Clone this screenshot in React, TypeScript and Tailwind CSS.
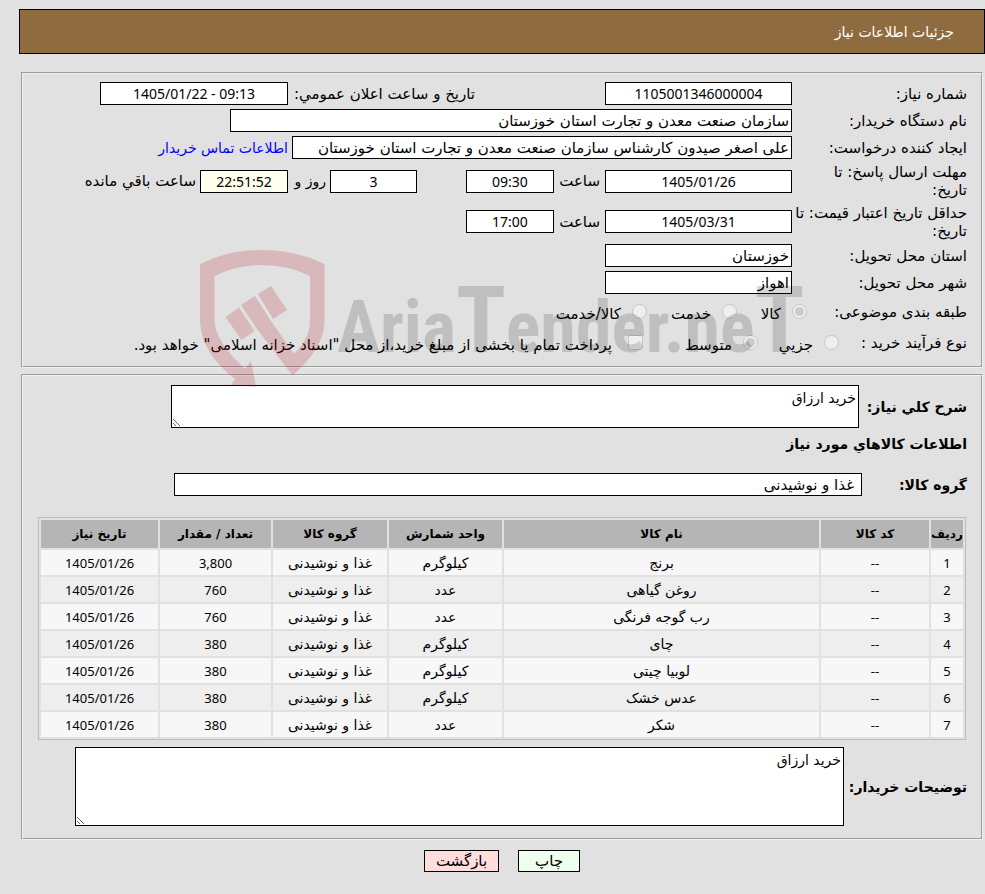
import React from 'react';

interface Item {
  name: string;
  unit: string;
  amount: string;
}

const items: Item[] = [
  { name: 'برنج', unit: 'کیلوگرم', amount: '3,800' },
  { name: 'روغن گیاهی', unit: 'عدد', amount: '760' },
  { name: 'رب گوجه فرنگی', unit: 'عدد', amount: '760' },
  { name: 'چای', unit: 'کیلوگرم', amount: '380' },
  { name: 'لوبیا چیتی', unit: 'کیلوگرم', amount: '380' },
  { name: 'عدس خشک', unit: 'کیلوگرم', amount: '380' },
  { name: 'شکر', unit: 'عدد', amount: '380' },
];

const group = 'غذا و نوشیدنی';
const neededAt = '1405/01/26';

interface BoxProps {
  id: string;
  value: string;
  className: string;
}

const Box: React.FC<BoxProps> = ({ id, value, className }) => (
  <input id={id} value={value} readOnly className={`h-[23px] shrink-0 border border-black bg-white px-[2px] ${className}`} />
);

// dates, times and counts
const NumberBox: React.FC<BoxProps> = ({ id, value, className }) => (
  <input
    id={id}
    value={value}
    readOnly
    className={`h-[23px] shrink-0 border border-black px-[2px] text-center font-['Noto_Sans',sans-serif] text-[14px] ${className}`}
  />
);

interface RowProps {
  label: string;
  htmlFor?: string;
  className?: string;
  labelClass?: string;
  children: React.ReactNode;
}

const Row: React.FC<RowProps> = ({ label, htmlFor, className = 'h-[27px]', labelClass = 'w-[175px]', children }) => (
  <div className={`flex items-center ${className}`}>
    <label htmlFor={htmlFor} className={`shrink-0 ${labelClass}`}>
      {label}
    </label>
    {children}
  </div>
);

interface OptionProps {
  name: string;
  label: string;
  checked?: boolean;
  className: string;
}

const Option: React.FC<OptionProps> = ({ name, label, checked = false, className }) => (
  <label className={`flex shrink-0 items-center gap-[11px] whitespace-nowrap ${className}`}>
    <input type="radio" name={name} defaultChecked={checked} disabled className="size-[15px] shrink-0" />
    <span className="pt-1">{label}</span>
  </label>
);

const Watermark: React.FC = () => (
  <div dir="ltr" aria-hidden="true" className="pointer-events-none absolute top-[250px] left-[200px] flex">
    <svg width="125" height="137" viewBox="0 0 125 137" className="shrink-0 fill-[#b4141e]/20">
      <path d="M0 14Q28 0 62 0T124.500 14V72Q124 98 92.500 125.500L57 79L71 71L94 104Q110 88 110 72V26Q88 15 62 15T14.500 26V72Q16 92 45 119L51 111L56 137L31 135L35 129Q2 104 0 72Z" />
      <path d="M25.500 67L39 57.500L54.500 81L41.500 90Z" />
      <path d="M41 55L55 46L71 71L57 79Z" />
      <path d="M58 44L71 36L87 60L73 69Z" />
    </svg>
    <span className="ml-3 pt-[26px] font-['Roboto_Condensed','Liberation_Sans_Narrow',sans-serif] text-[72px] leading-[90px] font-bold whitespace-nowrap text-black/15">
      Aria<span className="text-[92px]">T</span>ender.ne<span className="text-[92px]">T</span>
    </span>
  </div>
);

const App: React.FC = () => {
  return (
    <div
      dir="rtl"
      className="relative min-h-screen bg-[#e1e1e1] pt-[9px] pb-[22px] pl-[19px] font-['DejaVu_Sans',sans-serif] text-[15px] leading-[18px] text-black"
    >
      <header className="flex h-[45px] items-center border border-black bg-[#8f6c40] px-[30px]">
        <h1 className="text-[14px] text-white">جزئیات اطلاعات نیاز</h1>
      </header>

      <fieldset className="mt-[18px] mr-[2px] ml-[2px] border-2 border-[#f0f0f0] px-[14px] pt-[6px] pb-[8px] [border-style:groove]">
        <Row label="شماره نیاز:" htmlFor="number">
          <div className="w-[317px] shrink-0">
            <NumberBox id="number" value="1105001346000004" className="w-[187px] bg-white" />
          </div>
          <label htmlFor="announced" className="w-[187px] shrink-0 whitespace-nowrap">
            تاریخ و ساعت اعلان عمومي:
          </label>
          <NumberBox id="announced" value="1405/01/22 - 09:13" className="w-[188px] bg-white [direction:ltr]" />
        </Row>
        <Row label="نام دستگاه خریدار:" htmlFor="buyer">
          <Box id="buyer" value="سازمان صنعت معدن و تجارت استان خوزستان" className="w-[562px]" />
        </Row>
        <Row label="ایجاد کننده درخواست:" htmlFor="creator">
          <Box
            id="creator"
            value="علی اصغر صیدون کارشناس سازمان صنعت معدن و تجارت استان خوزستان"
            className="w-[500px]"
          />
          <a href="#contact" className="mr-1 text-[14px] whitespace-nowrap text-[#0000ff]">
            اطلاعات تماس خریدار
          </a>
        </Row>
        <Row label="مهلت ارسال پاسخ: تا تاریخ:" htmlFor="deadline" className="h-[40px]" labelClass="w-[175px] pl-[30px]">
          <NumberBox id="deadline" value="1405/01/26" className="w-[187px] bg-white" />
          <label htmlFor="deadlineTime" className="w-[51px] shrink-0 pr-[5px]">
            ساعت
          </label>
          <NumberBox id="deadlineTime" value="09:30" className="w-[88px] bg-white" />
          <NumberBox id="daysLeft" value="3" className="mr-[49px] w-[87px] bg-white" />
          <label htmlFor="daysLeft" className="w-[42px] shrink-0 pr-1 text-[14px] whitespace-nowrap">
            روز و
          </label>
          <NumberBox id="timeLeft" value="22:51:52" className="w-[88px] bg-[#ffffee]" />
          <label htmlFor="timeLeft" className="pr-1 whitespace-nowrap">
            ساعت باقي مانده
          </label>
        </Row>
        <Row label="حداقل تاریخ اعتبار قیمت: تا تاریخ:" htmlFor="validity" className="h-[41px]">
          <NumberBox id="validity" value="1405/03/31" className="w-[187px] bg-white" />
          <label htmlFor="validityTime" className="w-[51px] shrink-0 pr-[5px]">
            ساعت
          </label>
          <NumberBox id="validityTime" value="17:00" className="w-[88px] bg-white" />
        </Row>
        <Row label="استان محل تحویل:" htmlFor="province">
          <Box id="province" value="خوزستان" className="w-[187px]" />
        </Row>
        <Row label="شهر محل تحویل:" htmlFor="city">
          <Box id="city" value="اهواز" className="w-[187px]" />
        </Row>
        <Row label="طبقه بندی موضوعی:" className="h-[31px]" labelClass="w-[160px]">
          <Option name="subject" label="کالا" checked className="w-[70px]" />
          <Option name="subject" label="خدمت" className="w-[90px]" />
          <Option name="subject" label="کالا/خدمت" className="w-[100px]" />
        </Row>
        <Row label="نوع فرآیند خرید :" className="h-[31px]" labelClass="w-[128px]">
          <Option name="process" label="جزيي" className="w-[81px]" />
          <Option name="process" label="متوسط" checked className="w-[115px]" />
          <label className="flex items-center gap-4 whitespace-nowrap">
            <input type="checkbox" disabled className="size-[15px] shrink-0" />
            <span className="pt-1">پرداخت تمام یا بخشی از مبلغ خرید،از محل "اسناد خزانه اسلامی" خواهد بود.</span>
          </label>
        </Row>
      </fieldset>

      <fieldset className="mt-[6px] mr-[2px] ml-[2px] border-2 border-[#f0f0f0] px-[14px] pt-[9px] pb-[12px] [border-style:groove]">
        <div className="flex items-center pl-[134px]">
          <label htmlFor="summary" className="w-[108px] shrink-0 text-[14px] font-bold whitespace-nowrap">
            شرح کلي نیاز:
          </label>
          <textarea
            id="summary"
            readOnly
            defaultValue="خرید ارزاق"
            className="block h-[43px] min-w-0 flex-1 border border-black bg-white px-[2px] py-[3px] text-[14px]"
          />
        </div>
        <h2 className="mt-[7px] text-[14px] leading-[18px] font-bold">اطلاعات کالاهاي مورد نیاز</h2>
        <div className="mt-5 flex items-center pl-[137px]">
          <label htmlFor="goodsGroup" className="w-[105px] shrink-0 text-[14px] font-bold">
            گروه کالا:
          </label>
          <input
            id="goodsGroup"
            readOnly
            value={group}
            className="h-[23px] min-w-0 flex-1 border border-black bg-white px-[7px]"
          />
        </div>

        <div className="mt-[21px] mr-[1px] ml-[1px]">
          <table className="w-full table-fixed border-separate border-spacing-[2px] border border-[#bcbcbc] text-center text-[14px]">
            <thead>
              <tr className="h-[28px] bg-[#b5b5b5] text-[12px]">
                <th className="w-[32px] whitespace-nowrap">ردیف</th>
                <th className="w-[108px]">کد کالا</th>
                <th>نام کالا</th>
                <th className="w-[113px]">واحد شمارش</th>
                <th className="w-[114px]">گروه کالا</th>
                <th className="w-[111px]">تعداد / مقدار</th>
                <th className="w-[117px]">تاریخ نیاز</th>
              </tr>
            </thead>
            <tbody>
              {items.map((item, index) => (
                <tr key={index} className="h-[25px] odd:bg-[#f7f7f7] even:bg-[#eeeeee]">
                  <td className="font-['Noto_Sans',sans-serif] text-[13px]">{index + 1}</td>
                  <td className="font-['Noto_Sans',sans-serif] text-[13px]">--</td>
                  <td>{item.name}</td>
                  <td>{item.unit}</td>
                  <td>{group}</td>
                  <td className="font-['Noto_Sans',sans-serif] text-[13px]">{item.amount}</td>
                  <td className="font-['Noto_Sans',sans-serif] text-[13px]">{neededAt}</td>
                </tr>
              ))}
            </tbody>
          </table>
        </div>

        <div className="mt-[7px] flex items-center pl-[38px]">
          <label htmlFor="notes" className="w-[123px] shrink-0 text-[14px] font-bold whitespace-nowrap">
            توضیحات خریدار:
          </label>
          <textarea
            id="notes"
            readOnly
            defaultValue="خرید ارزاق"
            className="block h-[79px] min-w-0 flex-1 border border-black bg-white px-[2px] py-[3px] text-[14px]"
          />
        </div>
      </fieldset>

      <div className="mt-[10px] mr-[2px] ml-[2px] flex justify-center gap-[19px]">
        <button className="h-[22px] w-[62px] border border-black bg-[#eeffee]">چاپ</button>
        <button className="h-[22px] w-[75px] border border-black bg-[#ffdddd]">بازگشت</button>
      </div>

      <Watermark />
    </div>
  );
};

export default App;
